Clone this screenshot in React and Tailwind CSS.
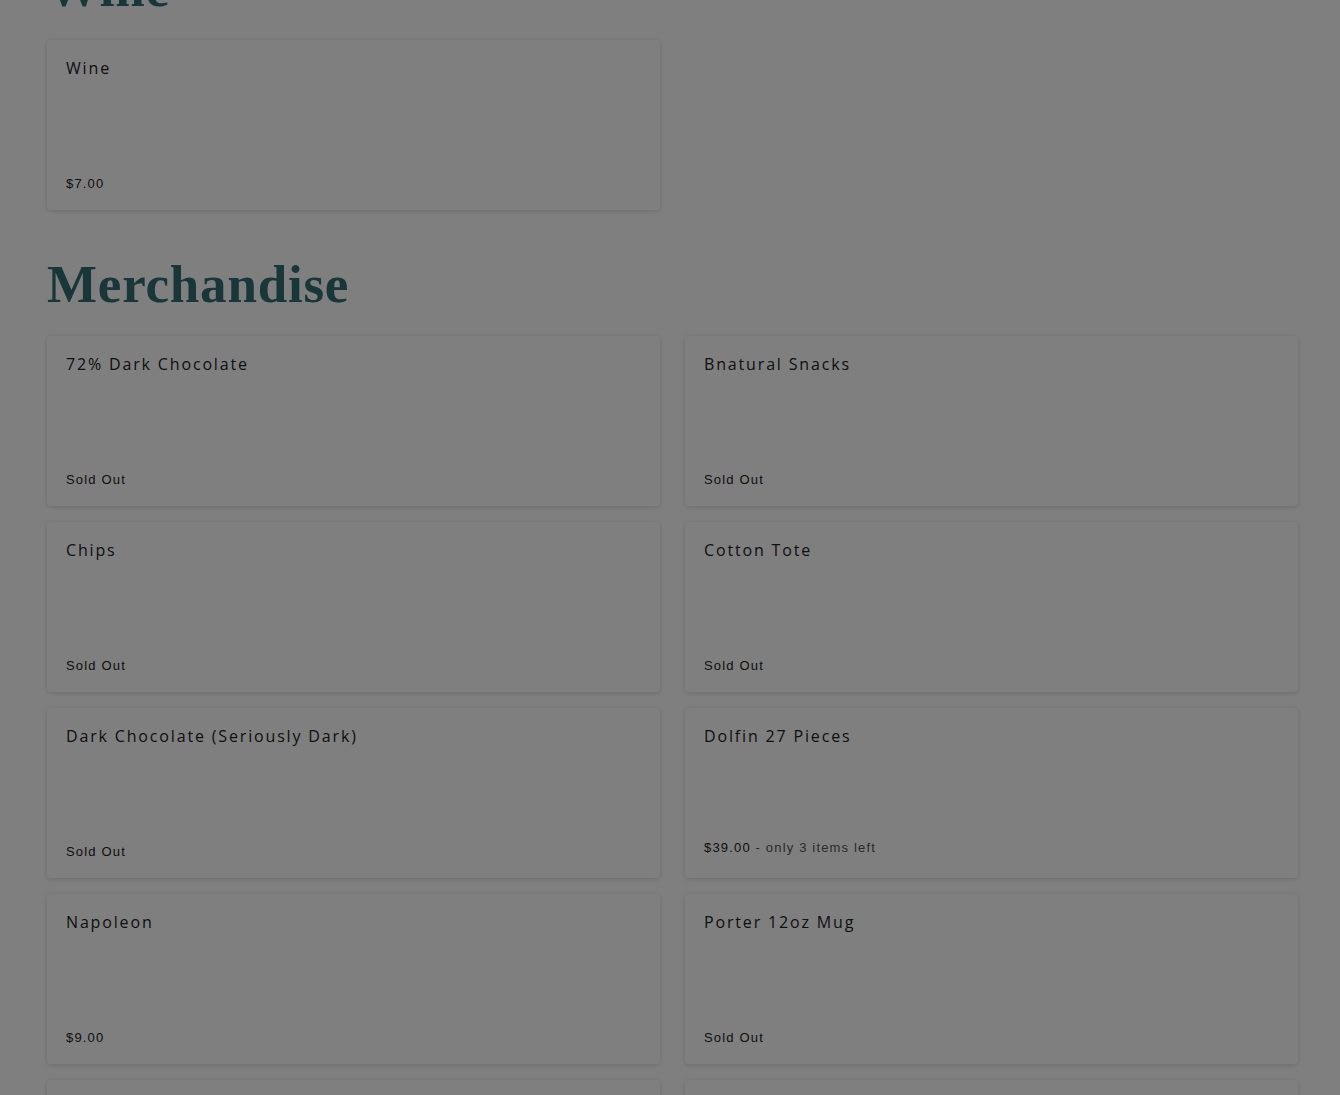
import React from 'react';

const sections = [
  {
    title: 'Wine',
    items: [{ name: 'Wine', price: '$7.00' }],
  },
  {
    title: 'Merchandise',
    items: [
      { name: '72% Dark Chocolate', price: 'Sold Out' },
      { name: 'Bnatural Snacks', price: 'Sold Out' },
      { name: 'Chips', price: 'Sold Out' },
      { name: 'Cotton Tote', price: 'Sold Out' },
      { name: 'Dark Chocolate (Seriously Dark)', price: 'Sold Out' },
      { name: 'Dolfin 27 Pieces', price: '$39.00', note: ' - only 3 items left', low: true },
      { name: 'Napoleon', price: '$9.00' },
      { name: 'Porter 12oz Mug', price: 'Sold Out' },
      { name: '', price: '' },
      { name: '', price: '' },
    ],
  },
];

const ItemCard = ({ item }) => (
  <div className="flex h-[170px] flex-col justify-between rounded-[4px] bg-white px-[19px] pt-[17px] pb-[17px] shadow-[0_1px_5px_rgba(0,0,0,0.16)]">
    <div className="text-[16px] leading-[22px] tracking-[0.115em] text-[#222]" style={{ fontFamily: '"Open Sans", sans-serif' }}>
      {item.name}
    </div>
    <div
      className={`text-[13px] leading-[18px] tracking-[0.09em] text-[#222] ${item.low ? 'mb-[4px]' : ''}`}
      style={{ fontFamily: '"Liberation Sans", sans-serif' }}
    >
      {item.price}
      {item.note && <span className="text-[#555]">{item.note}</span>}
    </div>
  </div>
);

export default function App() {
  return (
    <div className="relative h-[1095px] overflow-hidden bg-white">
      <div className="-mt-[38px] pl-[47px] pr-[42px]">
        {sections.map((s, i) => (
          <section key={s.title} className={i > 0 ? 'mt-[48px]' : ''}>
            <h2
              className="mb-[25px] text-[53px] font-bold leading-none tracking-[0.015em] text-[#326c71]"
              style={{ fontFamily: '"Liberation Serif", serif' }}
            >
              {s.title}
            </h2>
            <div className="grid grid-cols-2 gap-x-[25px] gap-y-[16px]">
              {s.items.map((it, j) => (
                <ItemCard key={j} item={it} />
              ))}
            </div>
          </section>
        ))}
      </div>
      <div className="fixed inset-0 bg-black/50" />
    </div>
  );
}
